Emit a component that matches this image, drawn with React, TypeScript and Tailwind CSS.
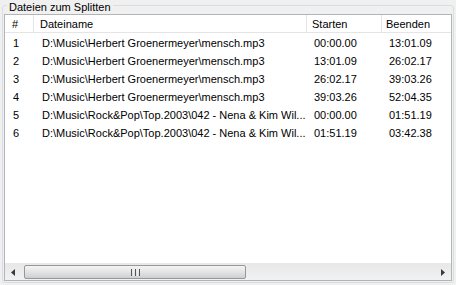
import React from "react";

const ROWS = [
  { n: "1", file: "D:\\Music\\Herbert Groenermeyer\\mensch.mp3", start: "00:00.00", end: "13:01.09" },
  { n: "2", file: "D:\\Music\\Herbert Groenermeyer\\mensch.mp3", start: "13:01.09", end: "26:02.17" },
  { n: "3", file: "D:\\Music\\Herbert Groenermeyer\\mensch.mp3", start: "26:02.17", end: "39:03.26" },
  { n: "4", file: "D:\\Music\\Herbert Groenermeyer\\mensch.mp3", start: "39:03.26", end: "52:04.35" },
  { n: "5", file: "D:\\Music\\Rock&Pop\\Top.2003\\042 - Nena & Kim Wil...", start: "00:00.00", end: "01:51.19" },
  { n: "6", file: "D:\\Music\\Rock&Pop\\Top.2003\\042 - Nena & Kim Wil...", start: "01:51.19", end: "03:42.38" },
];

export default function App() {
  return (
    <div className="w-[456px] h-[285px] bg-[#f0f0f0] text-[11px] text-black font-['Liberation_Sans',Tahoma,sans-serif] pt-[5px] pl-[2px] pr-[2px] pb-[2px]">
      {/* group box */}
      <div className="relative h-full border border-[#d5dfe5] rounded-[3px] pt-[8px] px-[1px] pb-[1px] flex flex-col">
        <span className="absolute -top-[5px] left-[4px] bg-[#f0f0f0] px-[2px] leading-[13px]">Dateien zum Splitten</span>

        {/* list view */}
        <div className="flex-1 flex flex-col border border-[#b4b4b4] bg-white">
          <div className="flex h-[18px] items-stretch border-b border-[#e5e5e5] leading-none">
            <div className="w-[29px] pl-[7px] pt-[2px] border-r border-[#e5e5e5] flex items-center">#</div>
            <div className="w-[273px] pl-[6px] pt-[2px] border-r border-[#e5e5e5] flex items-center">Dateiname</div>
            <div className="w-[75px] pl-[5px] pt-[2px] border-r border-[#e5e5e5] flex items-center">Starten</div>
            <div className="flex-1 pl-[4px] pt-[2px] flex items-center">Beenden</div>
          </div>

          <div className="flex-1 pt-[1px]">
            {ROWS.map((r) => (
              <div key={r.n} className="flex h-[18px] items-center whitespace-nowrap">
                <div className="w-[29px] pl-[8px]">{r.n}</div>
                <div className="w-[273px] pl-[8px] overflow-hidden">{r.file}</div>
                <div className="w-[75px] pl-[7px]">{r.start}</div>
                <div className="flex-1 pl-[7px]">{r.end}</div>
              </div>
            ))}
          </div>

          {/* horizontal scrollbar */}
          <div className="h-[17px] flex items-stretch bg-gradient-to-b from-[#e8e8e8] to-[#f2f2f2] border-t border-[#e8e8e8]">
            <div className="w-[17px] flex items-center justify-center pr-[2px]">
              <svg width="4" height="7" viewBox="0 0 4 7">
                <path d="M4 0 L0 3.5 L4 7 Z" fill="#3a3a3a" />
              </svg>
            </div>
            <div className="flex-1 flex items-stretch py-[1px] pl-[2px]">
              <div className="w-[222px] rounded-[2px] border border-[#989898] bg-gradient-to-b from-[#f4f4f4] via-[#e4e4e4] to-[#cfcfcf] flex items-center justify-center">
                <div className="flex gap-[1px]">
                  <span className="w-[1px] h-[7px] bg-[#555]" />
                  <span className="w-[1px] h-[7px] bg-[#eee]" />
                  <span className="w-[1px] h-[7px] bg-[#555]" />
                  <span className="w-[1px] h-[7px] bg-[#eee]" />
                  <span className="w-[1px] h-[7px] bg-[#555]" />
                </div>
              </div>
            </div>
            <div className="w-[17px] flex items-center justify-center">
              <svg width="4" height="7" viewBox="0 0 4 7">
                <path d="M0 0 L4 3.5 L0 7 Z" fill="#3a3a3a" />
              </svg>
            </div>
          </div>
        </div>
      </div>
    </div>
  );
}
